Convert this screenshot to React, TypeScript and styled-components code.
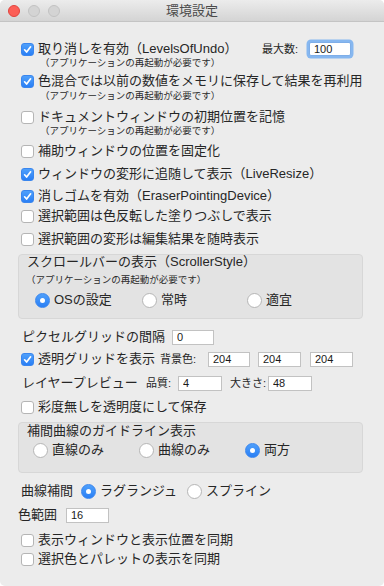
import React from 'react'
import styled, { createGlobalStyle } from 'styled-components'

const GlobalStyle = createGlobalStyle`
	html, body {
		margin: 0;
		padding: 0;
		background: #ffffff;
	}
	body {
		font-family: 'Liberation Sans', 'Noto Sans CJK JP', sans-serif;
	}
`

const Window = styled.div`
	width: 384px;
	height: 586px;
	background: #ececec;
	border-radius: 5px;
	overflow: hidden;
	display: flex;
	flex-direction: column;
	color: #262626;
`

const TitleBar = styled.div`
	height: 21px;
	flex: none;
	display: grid;
	grid-template-columns: 1fr auto 1fr;
	align-items: center;
	background: linear-gradient(#ececec, #d4d4d4);
	border-bottom: 1px solid #c4c4c4;
`

const Lights = styled.div`
	display: flex;
	gap: 8px;
	padding-left: 8px;
`

const Light = styled.span<{ $color: string; $edge: string }>`
	width: 12px;
	height: 12px;
	box-sizing: border-box;
	border-radius: 50%;
	background: ${p => p.$color};
	border: 1px solid ${p => p.$edge};
`

const Title = styled.div`
	font-size: 13px;
	color: #4a4a4a;
	line-height: 21px;
`

const Body = styled.div`
	display: flex;
	flex-direction: column;
	padding: 0 21px 0 18px;
`

const Line = styled.div<{ $mt: number; $pl?: number; $h?: number }>`
	display: flex;
	align-items: center;
	height: ${p => p.$h ?? 16}px;
	margin-top: ${p => p.$mt}px;
	padding-left: ${p => p.$pl ?? 3}px;
	white-space: nowrap;
`

const Text = styled.span<{ $w?: number }>`
	font-size: 13px;
	line-height: 16px;
	${p => (p.$w ? `width: ${p.$w}px; flex: none;` : '')}
`

const SmallLabel = styled.span<{ $w: number; $ml?: number }>`
	font-size: 11px;
	line-height: 14px;
	width: ${p => p.$w}px;
	margin-left: ${p => p.$ml ?? 0}px;
	flex: none;
`

const Note = styled.div<{ $mt: number; $pl?: number }>`
	font-size: 9.5px;
	line-height: 8px;
	height: 8px;
	margin-top: ${p => p.$mt}px;
	padding-left: ${p => p.$pl ?? 22}px;
	white-space: nowrap;
	color: #2a2a2a;
`

const Box = styled.span<{ $on?: boolean }>`
	width: 13px;
	height: 13px;
	box-sizing: border-box;
	border-radius: 3px;
	margin-right: 4px;
	flex: none;
	display: flex;
	align-items: center;
	justify-content: center;
	background: ${p => (p.$on ? 'linear-gradient(#4fa0fb, #2a7ff5)' : '#ffffff')};
	border: 1px solid ${p => (p.$on ? '#3a86ee' : '#b5b5b5')};
`

const Dot = styled.span<{ $on?: boolean }>`
	width: 15px;
	height: 15px;
	box-sizing: border-box;
	border-radius: 50%;
	margin-right: 4px;
	flex: none;
	display: flex;
	align-items: center;
	justify-content: center;
	background: ${p => (p.$on ? 'linear-gradient(#4fa0fb, #2a7ff5)' : '#ffffff')};
	border: 1px solid ${p => (p.$on ? '#3a86ee' : '#b5b5b5')};
	&::after {
		content: '';
		width: 5px;
		height: 5px;
		border-radius: 50%;
		background: ${p => (p.$on ? '#ffffff' : 'transparent')};
	}
`

const Field = styled.input<{ $w: number; $ml?: number; $focus?: boolean }>`
	width: ${p => p.$w}px;
	height: ${p => (p.$focus ? 14 : 15)}px;
	margin: 0 0 0 ${p => p.$ml ?? 0}px;
	box-sizing: border-box;
	flex: none;
	padding: 0 0 0 4px;
	font-family: 'Liberation Sans', sans-serif;
	font-size: 11px;
	color: #1a1a1a;
	background: #ffffff;
	border: 1px solid ${p => (p.$focus ? '#7eaee8' : '#c2c2c2')};
	border-radius: ${p => (p.$focus ? 2 : 0)}px;
	box-shadow: ${p => (p.$focus ? '0 0 0 2.5px #86b7f0' : 'none')};
	outline: none;
`

const MaxBox = styled.div`
	margin-left: auto;
	margin-right: 12px;
	display: flex;
	align-items: center;
`

const Group = styled.div<{ $mt: number; $pb: number }>`
	margin-top: ${p => p.$mt}px;
	padding-bottom: ${p => p.$pb}px;
	background: #e3e3e3;
	border: 1px solid #d7d7d7;
	border-radius: 4px;
	display: flex;
	flex-direction: column;
`

const GroupTitle = styled.div<{ $mt: number }>`
	font-size: 13px;
	line-height: 14px;
	height: 14px;
	margin-top: ${p => p.$mt}px;
	padding-left: 8px;
	white-space: nowrap;
`

const RadioRow = styled.div<{ $mt: number; $pl: number; $cols: string }>`
	display: grid;
	grid-template-columns: ${p => p.$cols};
	align-items: center;
	height: 16px;
	margin-top: ${p => p.$mt}px;
	padding-left: ${p => p.$pl}px;
`

const RadioItem = styled.label`
	display: flex;
	align-items: center;
	font-size: 13px;
	line-height: 16px;
	white-space: nowrap;
`

const Check: React.FC<{ on?: boolean }> = ({ on }) => (
	<Box $on={on}>
		{on && (
			<svg width="11" height="11" viewBox="0 0 11 11">
				<path d="M2.6 5.8 L4.6 8 L8.6 2.8" fill="none" stroke="#ffffff" strokeWidth="1.7" strokeLinecap="round" strokeLinejoin="round" />
			</svg>
		)}
	</Box>
)

const Radio: React.FC<{ on?: boolean; label: string }> = ({ on, label }) => (
	<RadioItem>
		<Dot $on={on} />
		{label}
	</RadioItem>
)

const RESTART = '（アプリケーションの再起動が必要です）'

export default function App() {
	return (
		<>
			<GlobalStyle />
			<Window>
				<TitleBar>
					<Lights>
						<Light $color="#fc5f57" $edge="#e0443e" />
						<Light $color="#d4d4d4" $edge="#c2c2c2" />
						<Light $color="#d4d4d4" $edge="#c2c2c2" />
					</Lights>
					<Title>環境設定</Title>
					<div />
				</TitleBar>
				<Body>
					<Line $mt={19}>
						<Check on />
						<Text>取り消しを有効（LevelsOfUndo）</Text>
						<MaxBox>
							<SmallLabel $w={47}>最大数:</SmallLabel>
							<Field $w={42} $focus defaultValue="100" />
						</MaxBox>
					</Line>
					<Note $mt={2}>{RESTART}</Note>

					<Line $mt={6}>
						<Check on />
						<Text>色混合では以前の数値をメモリに保存して結果を再利用</Text>
					</Line>
					<Note $mt={3}>{RESTART}</Note>

					<Line $mt={9}>
						<Check />
						<Text>ドキュメントウィンドウの初期位置を記憶</Text>
					</Line>
					<Note $mt={2}>{RESTART}</Note>

					<Line $mt={8}>
						<Check />
						<Text>補助ウィンドウの位置を固定化</Text>
					</Line>
					<Line $mt={7}>
						<Check on />
						<Text>ウィンドウの変形に追随して表示（LiveResize）</Text>
					</Line>
					<Line $mt={6}>
						<Check on />
						<Text>消しゴムを有効（EraserPointingDevice）</Text>
					</Line>
					<Line $mt={4}>
						<Check />
						<Text>選択範囲は色反転した塗りつぶしで表示</Text>
					</Line>
					<Line $mt={7}>
						<Check />
						<Text>選択範囲の変形は編集結果を随時表示</Text>
					</Line>

					<Group $mt={7} $pb={10}>
						<GroupTitle $mt={0}>スクロールバーの表示（ScrollerStyle）</GroupTitle>
						<Note $mt={7} $pl={7}>{RESTART}</Note>
						<RadioRow $mt={8} $pl={16} $cols="107px 105px auto">
							<Radio on label="OSの設定" />
							<Radio label="常時" />
							<Radio label="適宜" />
						</RadioRow>
					</Group>

					<Line $mt={10} $pl={4}>
						<Text $w={150}>ピクセルグリッドの間隔</Text>
						<Field $w={42} defaultValue="0" />
					</Line>
					<Line $mt={6}>
						<Check on />
						<Text $w={122}>透明グリッドを表示</Text>
						<SmallLabel $w={48}>背景色:</SmallLabel>
						<Field $w={42} defaultValue="204" />
						<Field $w={43} $ml={8} defaultValue="204" />
						<Field $w={43} $ml={9} defaultValue="204" />
					</Line>
					<Line $mt={8} $pl={4}>
						<Text $w={124}>レイヤープレビュー</Text>
						<SmallLabel $w={32}>品質:</SmallLabel>
						<Field $w={44} defaultValue="4" />
						<SmallLabel $w={38} $ml={8}>大きさ:</SmallLabel>
						<Field $w={44} defaultValue="48" />
					</Line>
					<Line $mt={8}>
						<Check />
						<Text>彩度無しを透明度にして保存</Text>
					</Line>

					<Group $mt={7} $pb={14}>
						<GroupTitle $mt={1}>補間曲線のガイドライン表示</GroupTitle>
						<RadioRow $mt={4} $pl={14} $cols="106px 106px auto">
							<Radio label="直線のみ" />
							<Radio label="曲線のみ" />
							<Radio on label="両方" />
						</RadioRow>
					</Group>

					<Line $mt={10}>
						<Text $w={60}>曲線補間</Text>
						<RadioRow $mt={0} $pl={0} $cols="106px auto">
							<Radio on label="ラグランジュ" />
							<Radio label="スプライン" />
						</RadioRow>
					</Line>
					<Line $mt={8} $pl={0}>
						<Text $w={48}>色範囲</Text>
						<Field $w={43} defaultValue="16" />
					</Line>
					<Line $mt={9}>
						<Check />
						<Text>表示ウィンドウと表示位置を同期</Text>
					</Line>
					<Line $mt={3}>
						<Check />
						<Text>選択色とパレットの表示を同期</Text>
					</Line>
				</Body>
			</Window>
		</>
	)
}
